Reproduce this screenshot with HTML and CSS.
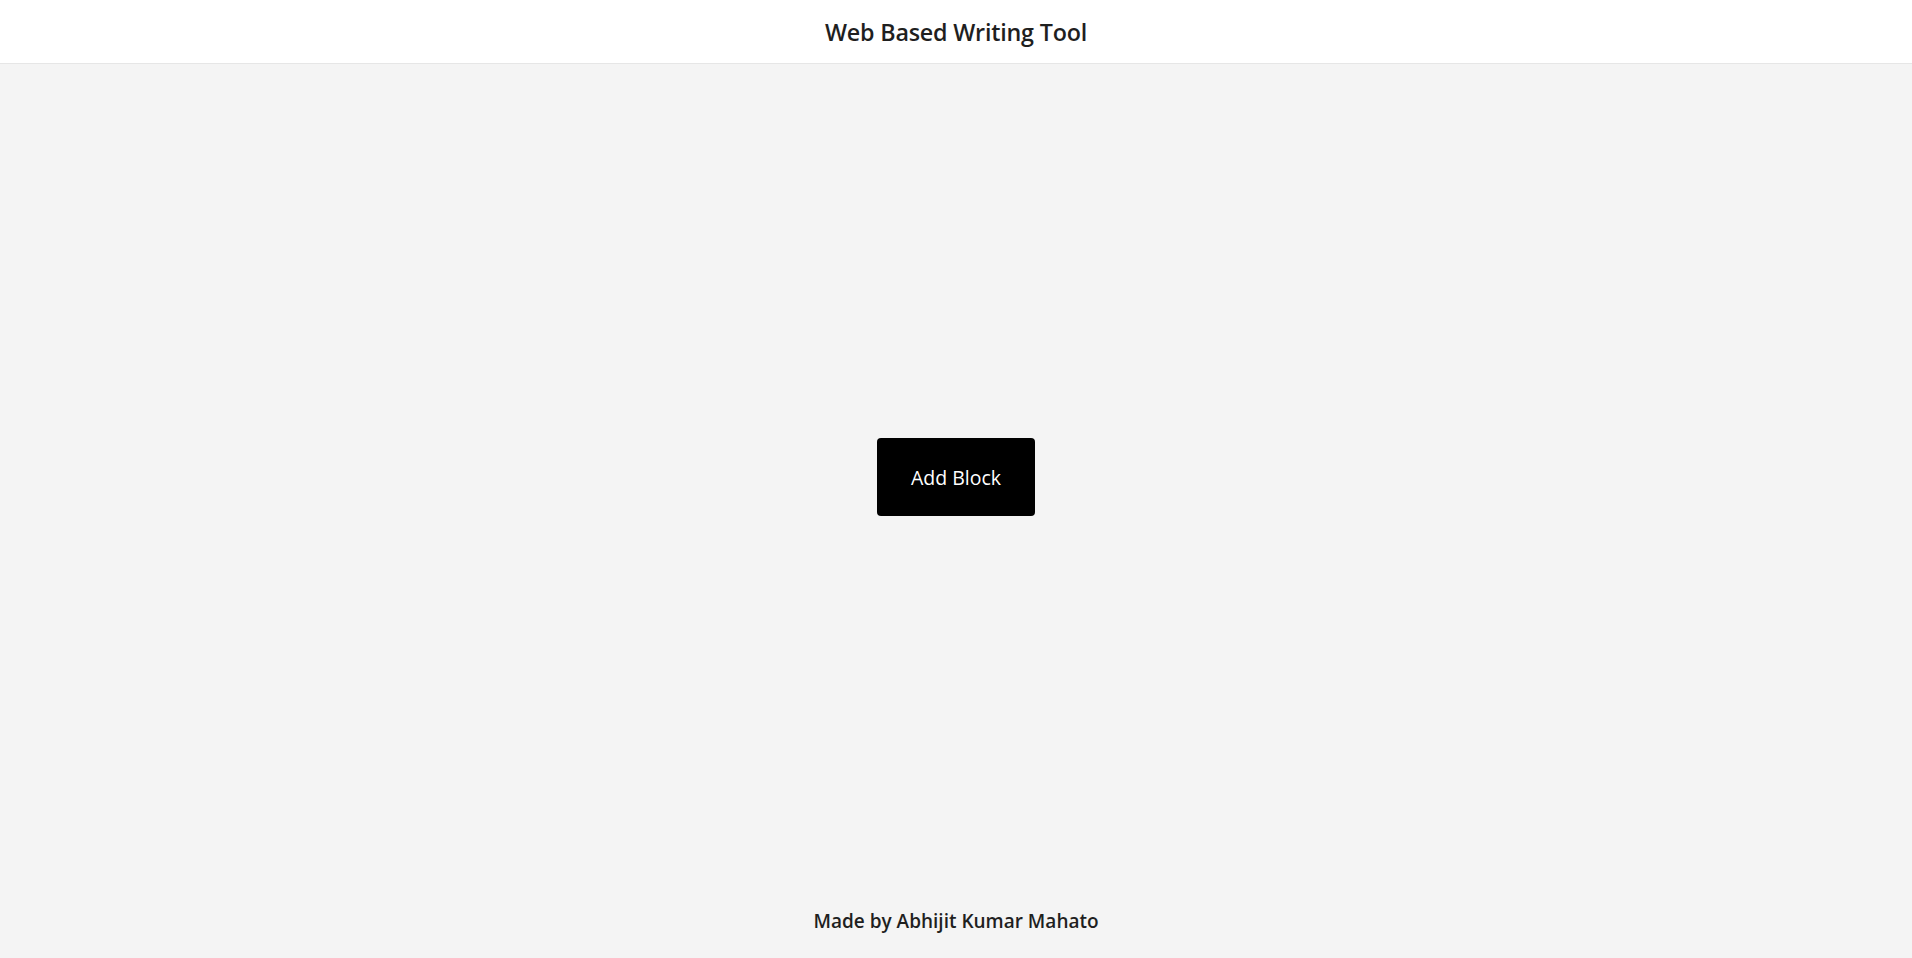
FILE: index.html
```html
<!DOCTYPE html>
<html lang="en">
<head>
<meta charset="utf-8">
<title>Web Based Writing Tool</title>
<link rel="stylesheet" href="styles.css">
</head>
<body>
<div class="page">
  <header class="header"><h1 class="title">Web Based Writing Tool</h1></header>
  <main class="main"><button class="add-btn">Add Block</button></main>
  <footer class="footer"><p class="credit">Made by Abhijit Kumar Mahato</p></footer>
</div>
</body>
</html>
```
FILE: styles.css
```css
* { box-sizing: border-box; }
html, body { margin: 0; padding: 0; }
body {
  background: #f4f4f4;
  font-family: "Open Sans", "Noto Sans", sans-serif;
  color: #1f1f1f;
}
.page {
  min-height: 100vh;
  display: flex;
  flex-direction: column;
}
.header {
  height: 64px;
  background: #ffffff;
  border-bottom: 1px solid #e6e6e6;
  display: flex;
  align-items: center;
  justify-content: center;
}
.title {
  margin: 0;
  font-size: 23.3px;
  font-weight: 600;
  letter-spacing: -0.2px;
}
.main {
  flex: 1;
  display: flex;
  align-items: center;
  justify-content: center;
}
.add-btn {
  width: 158px;
  height: 78px;
  background: #000;
  color: #fff;
  border: none;
  border-radius: 4px;
  font-family: inherit;
  font-size: 19.5px;
  font-weight: 400;
  cursor: pointer;
}
.footer {
  height: 68px;
  display: flex;
  align-items: flex-start;
  justify-content: center;
  padding-top: 18px;
}
.credit {
  margin: 0;
  font-size: 19px;
  font-weight: 600;
  line-height: 26px;
}
```
